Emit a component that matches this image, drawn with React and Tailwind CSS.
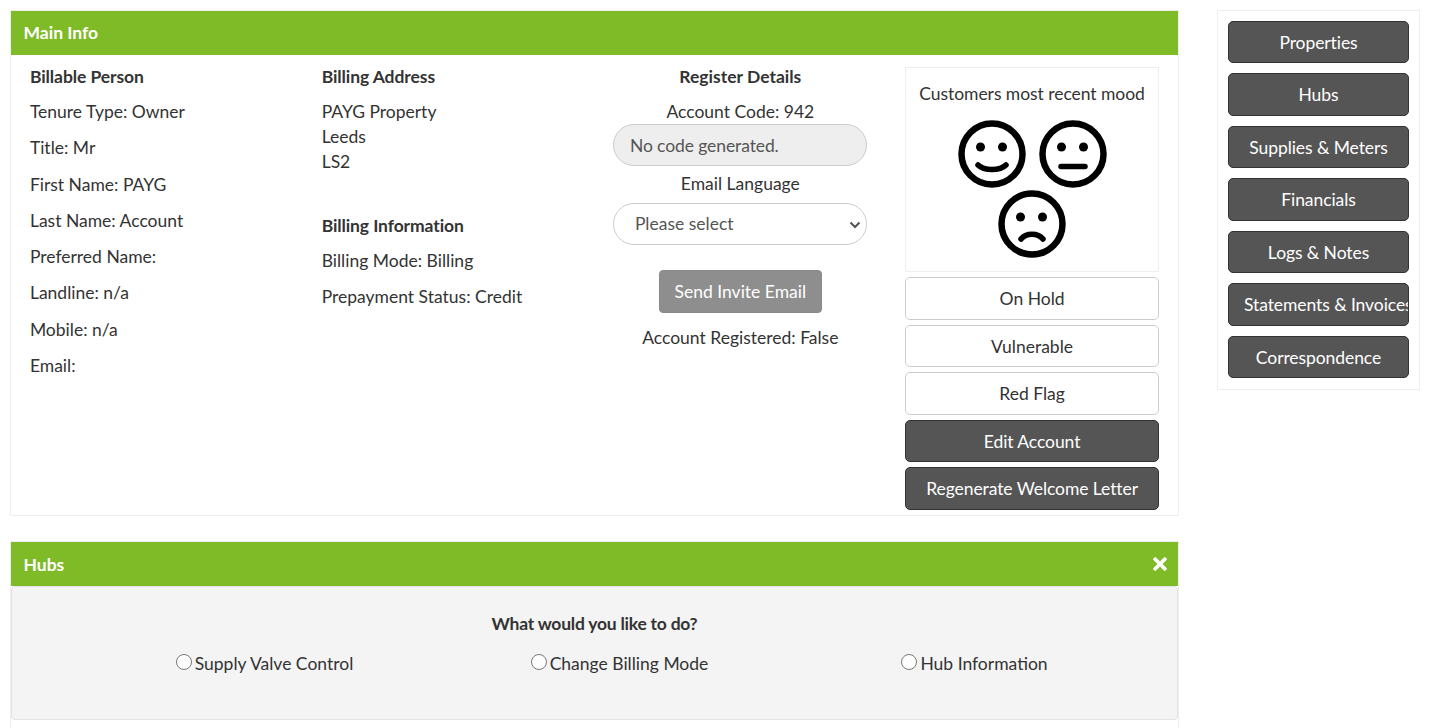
import React from 'react';
import { FaTimes } from 'react-icons/fa';

const person = [
  'Tenure Type: Owner',
  'Title: Mr',
  'First Name: PAYG',
  'Last Name: Account',
  'Preferred Name:',
  'Landline: n/a',
  'Mobile: n/a',
  'Email:',
];

const navLinks = [
  'Properties',
  'Hubs',
  'Supplies & Meters',
  'Financials',
  'Logs & Notes',
  'Statements & Invoices',
  'Correspondence',
];

const hubOptions = ['Supply Valve Control', 'Change Billing Mode', 'Hub Information'];

const Face = ({ children }) => (
  <svg width="68" height="68" viewBox="0 0 68 68" fill="none" stroke="#000" strokeWidth="5.5" strokeLinecap="round">
    <circle cx="34" cy="34" r="30.5" strokeWidth="6.5" />
    <circle cx="22.5" cy="27" r="4.5" fill="#000" stroke="none" />
    <circle cx="44.5" cy="27" r="4.5" fill="#000" stroke="none" />
    {children}
  </svg>
);

const DarkButton = ({ label }) => (
  <button className="block w-full h-[42.5px] px-[15px] bg-[#555] border border-[#333] rounded-[5px] text-white text-center tracking-[-0.08px] whitespace-nowrap overflow-hidden">
    {label}
  </button>
);

const LightButton = ({ label }) => (
  <button className="block w-full h-[42.5px] px-4 bg-white border border-[#ccc] rounded-[5px] text-[#333] text-center">
    {label}
  </button>
);

const Header = ({ title, className, children }) => (
  <div className="flex items-center justify-between h-11 pl-[12.5px] pr-[8px] bg-[#7fba27] text-white font-bold">
    <span className={className}>{title}</span>
    {children}
  </div>
);

const App = () => {
  return (
    <div className="h-[728px] overflow-hidden bg-white text-[#333] text-[17.5px] leading-[25px] font-['Lato',sans-serif]">
      <div className="flex items-start pt-[10px] pl-[10px]">
        <div className="w-[1169px]">
          {/* Main Info */}
          <div className="border border-[#eee] h-[506px]">
            <Header title="Main Info" className="pb-[2px]" />
            <div className="grid grid-cols-4">
              <div className="pl-[18.9px] pr-[19px] pt-[9px]">
                <p className="font-bold tracking-[-0.08px] mb-[10px]">Billable Person</p>
                {person.map((line) => (
                  <p key={line} className="mb-[11.3px]">{line}</p>
                ))}
              </div>

              <div className="pl-[18.9px] pr-[19px] pt-[9px]">
                <p className="font-bold tracking-[-0.08px] mb-[10px]">Billing Address</p>
                <p>PAYG Property</p>
                <p>Leeds</p>
                <p>LS2</p>
                <p className="font-bold tracking-[-0.1px] mt-[39px] mb-[10px]">Billing Information</p>
                <p className="mb-[11.2px]">Billing Mode: Billing</p>
                <p>Prepayment Status: Credit</p>
              </div>

              <div className="pl-[18.9px] pr-[19px] pt-[9px] text-center">
                <p className="font-bold mb-[10px]">Register Details</p>
                <p>Account Code: 942</p>
                <div className="h-[42px] px-[15.5px] flex items-center bg-[#eee] border border-[#ccc] rounded-full text-[#555] tracking-[-0.1px]">
                  No code generated.
                </div>
                <p className="mt-[5px]">Email Language</p>
                <div className="relative mt-[7px]">
                  <select className="block w-full h-[42px] px-[20.5px] pb-[2px] appearance-none bg-white border border-[#ccc] rounded-full text-[#555]">
                    <option>Please select</option>
                  </select>
                  <svg className="absolute right-[6px] top-[18px]" width="12" height="8" viewBox="0 0 12 8" fill="none" stroke="#555" strokeWidth="2">
                    <path d="M1.5 1.5 L6 6 L10.5 1.5" />
                  </svg>
                </div>
                <button className="h-[43px] w-[163px] mt-[25px] bg-[#8e8e8e] rounded-[4px] text-white border border-[#8a8a8a]">
                  Send Invite Email
                </button>
                <p className="mt-[12px]">Account Registered: False</p>
              </div>

              <div className="pl-[18.9px] pr-[19px] pt-[12px]">
                <div className="h-[205px] border border-[#eee] pt-[13px] text-center">
                  <p className="tracking-[-0.05px]">Customers most recent mood</p>
                  <div className="flex flex-wrap justify-center gap-x-[13px] gap-y-[2px] px-[20px] mt-[14px]">
                    <Face>
                      <path d="M20 45 C26 51 42 51 48 45" />
                    </Face>
                    <Face>
                      <path d="M22 46.5 H46" />
                    </Face>
                    <Face>
                      <path d="M23 49 C28 42.5 40 42.5 45 49" />
                    </Face>
                  </div>
                </div>
                <div className="flex flex-col gap-[5px] mt-[5.4px]">
                  <LightButton label="On Hold" />
                  <LightButton label="Vulnerable" />
                  <LightButton label="Red Flag" />
                  <DarkButton label="Edit Account" />
                  <DarkButton label="Regenerate Welcome Letter" />
                </div>
              </div>
            </div>
          </div>

          {/* Hubs */}
          <div className="border border-[#eee] mt-[25px] pb-8">
            <Header title="Hubs">
              <FaTimes className="text-white text-[20px]" />
            </Header>
            <div className="h-[134px] bg-[#f4f4f4] border border-[#e3e3e3] rounded-[4px] pt-[24px]">
              <p className="font-bold tracking-[-0.23px] text-center">What would you like to do?</p>
              <div className="grid grid-cols-3 pl-[75px] pr-[25px] mt-[15px]">
                {hubOptions.map((opt) => (
                  <label key={opt} className="flex justify-center items-center">
                    <input type="radio" name="hub" className="w-4 h-4 mr-[3px] mb-[3px]" />
                    {opt}
                  </label>
                ))}
              </div>
            </div>
          </div>
        </div>

        {/* Sidebar */}
        <div className="w-[203px] ml-[38px] border border-[#eee] px-[10px] pt-[9.9px] pb-[0.6px]">
          {navLinks.map((link) => (
            <div key={link} className="mb-[10px]">
              <DarkButton label={link} />
            </div>
          ))}
        </div>
      </div>
    </div>
  );
};

export default App;
